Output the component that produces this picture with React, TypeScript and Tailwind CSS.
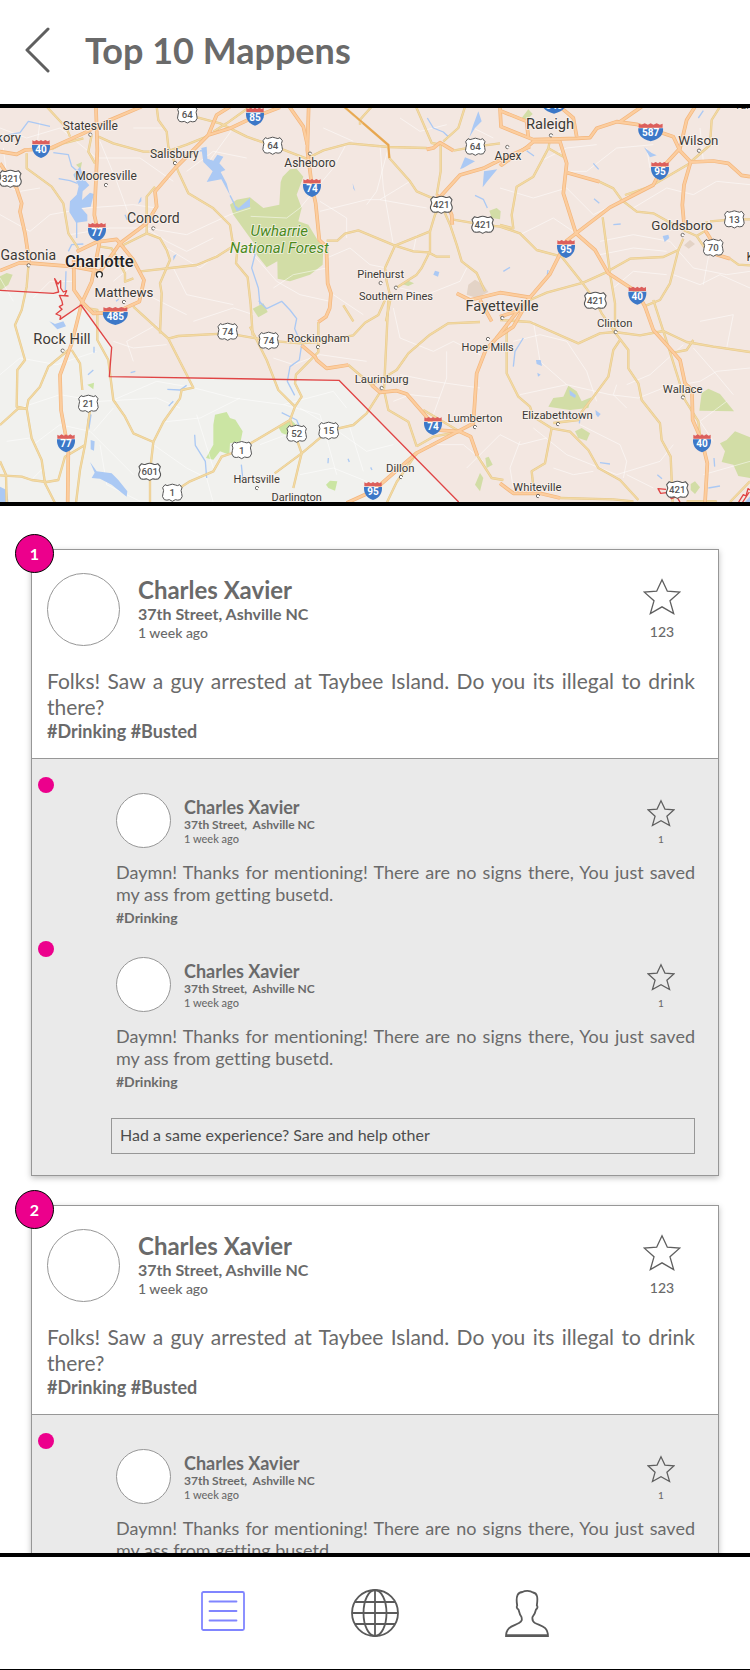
import React from "react";

const highways = [
  // I-77 and I-85
  "M288 0 L292 126 L283 321 L294 370 L298 406 L275 521 L245 586 L215 706 L180 801 L183 906 L205 1026 L203 1185",
  "M0 488 L60 464 L100 466 L220 476 L300 491 L360 406 L440 346 L470 296 L465 251 L525 181 L600 106 L625 81 L690 61 L765 26 L840 -2",
  "M625 81 L650 21 L690 -4",
  // I-40 west
  "M0 131 L50 139 L75 126 L150 121 L250 76 L330 36 L425 -4",
  "M0 166 L50 241 L65 286 L60 311 L75 376 L88 462",
  // Charlotte loop
  "M230 431 L290 402 L350 394 L400 456 L432 516 L418 581 L385 596 L346 614 L280 616 L250 586 L222 546 L221 456",
  // I-74
  "M926 -4 L922 126 L936 236 L947 286 L958 396 L979 416 L983 526 L993 556 L989 601 L978 626 L955 642",
  "M868 -4 L910 56 L922 110",
  "M905 712 L945 746 L950 756 L980 781 L1045 771",
  "M1115 831 L1140 853 L1190 848 L1220 858 L1275 921 L1310 966 L1380 971 L1412 986 L1432 1043",
  // I-95
  "M1040 1185 L1119 1149 L1250 1035 L1420 946 L1430 796 L1457 726 L1490 690 L1540 656 L1590 568 L1650 498 L1700 398 L1728 376 L1830 298 L1960 231 L1985 181 L2040 121 L2060 36 L2085 -4",
  // Raleigh
  "M1500 166 L1505 171 L1580 118 L1600 101 L1680 101 L1700 166 L1690 256 L1728 376 L1785 426 L1825 496 L1912 553 L1935 596 L1960 666 L2000 710 L2040 756 L2055 826 L2076 846 L2078 936 L2106 1000 L2122 1066 L2115 1185",
  "M1320 267 L1380 201 L1450 181 L1500 156 L1590 116",
  "M1500 0 L1503 56 L1600 95 L1732 91 L1770 89 L1790 61 L1850 41 L1910 49 L2020 86 L2040 128 L2072 162 L2140 159 L2185 166 L2225 202 L2250 206",
  "M1860 41 L1925 -4",
  "M1702 194 L1798 221",
  "M2072 162 L2052 231 L2047 291 L2052 346",
  "M1730 86 L1720 30 L1680 -4",
  "M1585 90 L1580 40 L1500 8",
  "M1310 262 L1335 276 L1355 320 L1357 350",
  "M1280 124 L1300 120 L1320 104 L1360 128",
  "M2115 366 L2130 390 L2150 440 L2190 452",
  // Fayetteville
  "M1370 556 L1410 576 L1500 554 L1590 568 L1560 600 L1490 690",
  "M1440 576 L1475 640 M1500 626 L1560 606",
  "M1500 1126 L1540 1156 L1620 1156 L1680 1170",
];

const roads = [
  "M80 136 L80 181 L155 236 L190 286 L205 376 L235 421",
  "M275 81 L265 131 L285 166",
  "M140 -4 L200 61 L210 86",
  "M295 86 L340 106 L430 131 L500 131",
  "M155 124 L190 106 L250 91",
  "M470 -4 L475 36 L500 71 L505 116 L535 191 L565 256 L640 301 L690 351 L697 396 L712 426 L708 466 L743 508 L752 590 L758 682",
  "M560 20 L660 46 L740 86 L818 113 L920 152 L970 127 L1048 106 L1165 117 L1280 120",
  "M440 376 L440 266 L465 236",
  "M370 411 L440 376 L480 391 L500 426 L510 456 L480 526 L485 556 L480 676",
  "M415 491 L590 471 L650 446 L697 416",
  "M300 416 L335 421 L375 496 L375 521 L400 511",
  "M85 476 L80 536 L65 606 L45 651 L75 756 L52 786 L50 896 L80 902",
  "M640 71 L680 46 L750 -4",
  "M500 131 L560 110 L620 86",
  "M1032 -4 L1165 111 L1168 150 L1230 220 L1250 250 L1320 280",
  "M1115 -4 L1080 35 L1080 50",
  "M1248 -4 L1295 105 L1322 110 L1322 190 L1310 262",
  "M1395 -4 L1375 60 L1330 100",
  "M980 398 L1012 398 L1035 377 L1075 367 L1185 413 L1290 370 L1290 430 L1265 480 L1250 500 L1188 540",
  "M1290 370 L1305 320 L1324 290 L1350 350 L1370 410 L1385 460 L1430 495 L1455 550",
  "M1360 335 L1448 350 L1500 356 L1560 376 L1610 426 L1685 446 L1748 526 L1786 578 L1805 616 L1844 672",
  "M1185 413 L1155 480 L1160 520 L1172 570 L1158 640",
  "M1185 413 L1240 430 L1285 433 L1310 446 L1350 446",
  "M0 1102 L65 1106 L95 1116 L140 1122 L175 1116 L195 1046 L255 1011 L270 906 L262 876",
  "M0 951 L55 901 L80 902 L95 991 L125 1056 L135 1126 L165 1185",
  "M80 902 L85 876 L120 836 L145 776 L205 726",
  "M0 1060 L18 1100 L20 1185",
  "M215 726 L240 766 L247 846",
  "M255 1011 L240 1086 L228 1185",
  "M270 602 L292 606 L292 696 L325 756 L340 876 L375 926 L400 976 L460 1002 L490 942 L540 871 L545 846 L580 839 L505 692 L400 596",
  "M505 692 L535 684 L683 676 L806 698 L900 706 L955 702 L1060 682 L1095 644 L1135 621 L1155 576",
  "M460 1002 L450 1091 L450 1185",
  "M1030 592 L1060 640",
  "M517 1154 L570 1120 L640 1090 L665 1046 L725 1026 L752 1006 L870 936 L885 896 L835 846 L800 756 L750 656",
  "M885 896 L905 866 L885 826 L888 800 L955 732 L955 642",
  "M824 1096 L905 1036 L986 968 L1060 951 L1100 916 L1140 853",
  "M870 936 L905 1036 L895 1076 L880 1140",
  "M1045 771 L1115 831 L1190 786 L1225 736 L1290 680 L1345 646 L1440 642",
  "M1165 576 L1152 846 L1165 906 L1225 941 L1250 1015",
  "M1250 1015 L1300 986 L1380 971 L1270 906",
  "M1432 1043 L1475 1110 L1510 1116",
  "M1250 1035 L1190 1122 L1160 1185",
  "M1500 636 L1590 642 L1735 706 L1800 676 L1844 672 L1920 682 L1990 669",
  "M1520 646 L1520 796 L1555 866 L1590 896 L1600 926 L1655 961 L1710 971 L1765 1026 L1795 1080 L1860 1116 L1915 1176",
  "M1655 961 L1635 1066 L1595 1090 L1600 1135",
  "M1860 696 L1840 726 L1825 806 L1770 880 L1745 912 L1735 936 L1660 945",
  "M1844 672 L1885 726 L1885 781 L1915 826 L1925 876 L1980 946 L1985 996 L2012 1046 L2018 1185",
  "M1960 576 L2000 700 L2055 876 L2095 940 L2100 980",
  "M1990 669 L2060 702 L2140 716 L2250 732",
  "M2020 734 L2060 726 L2080 696",
  "M1845 676 L1845 586 L1830 496 L1808 328",
  "M1830 486 L1890 452 L1990 447 L2035 426 L2050 392",
  "M2035 426 L2010 526 L1980 576 L1930 596",
  "M1590 576 L1640 554 L1750 524 L1825 490",
  "M1500 351 L1540 361 L1535 321 L1550 236 L1600 206 L1645 121 L1648 105",
  "M1645 121 L1690 146",
  "M1798 221 L1840 241 L1865 276 L1910 311 L1960 316 L2050 366 L2090 384 L2115 421 L2140 428",
  "M2130 340 L2203 334 L2250 334",
  "M2190 452 L2215 470 L2250 472",
  "M1875 261 L1950 236 L2070 166",
  "M2072 162 L2130 111 L2135 36 L2160 -4",
  "M2090 384 L2120 366 L2120 340",
  "M1680 1170 L1840 1174 L1900 1180",
  "M2190 1182 L2250 1120",
  "M2060 1180 L2150 1180",
  "M1360 128 L1426 116 L1500 106",
];

const lanes = [
  "M0 60 L80 90 L180 60 L290 150 L420 150 L520 220",
  "M0 320 L90 370 L150 320 L260 300 L400 290 L470 300",
  "M210 380 L330 360 L440 360 L560 380 L690 320 L752 300",
  "M300 100 L350 220 L390 330 L500 400 L560 430 L640 390",
  "M500 420 L600 480 L650 440 M520 480 L560 560 L700 590",
  "M0 230 L60 250 L120 240 M10 120 L20 200 M120 40 L110 120",
  "M560 190 L640 130 L740 150 M620 170 L700 60 M400 60 L490 60",
  "M752 325 L860 330 L900 300 L1000 180 L1040 106",
  "M960 310 L1100 275 L1140 275 L1230 220 M1140 110 L1150 240 L1180 410",
  "M1165 120 L1130 250 L1100 290 M1140 275 L1280 300",
  "M980 450 L1050 420 L1110 470 L1160 480 M1040 390 L1040 330 L960 280",
  "M820 540 L880 500 L980 480 M760 440 L830 520 L900 560 L990 580",
  "M1200 540 L1280 560 L1380 520 L1400 480 M1240 430 L1250 380",
  "M1200 30 L1260 70 L1340 50 M970 60 L1060 100 M1420 60 L1480 90",
  "M1500 240 L1600 270 L1700 240 L1780 320 L1860 280",
  "M1700 190 L1760 190 L1850 120 L1960 110 M1620 160 L1700 120 L1790 110",
  "M1560 380 L1660 330 L1728 376 L1800 440 L1900 420 L2000 430",
  "M1900 300 L2000 240 L2080 260 L2150 220 L2250 230",
  "M1800 400 L1900 380 L2010 400 L2080 480 L2180 500 L2250 490",
  "M2020 500 L2100 530 L2160 500 L2250 540 M2130 420 L2110 530",
  "M1840 540 L1900 490 L2000 500 M2100 60 L2110 160 M1940 120 L1950 180",
  "M1540 700 L1620 680 L1700 700 L1760 790 L1790 880 M1600 640 L1620 760 L1700 830",
  "M1560 860 L1700 830 L1830 860 L1915 870 L1990 840 L2100 820 L2150 790 L2250 780",
  "M1880 830 L1950 800 L2050 710 M1850 830 L1840 860 L1880 900",
  "M1600 960 L1700 1040 L1850 1100 L1980 1060 L2020 1010",
  "M1740 950 L1860 1010 L1880 1060 L1870 1110 M1960 1140 L1880 1100",
  "M1500 980 L1560 1010 L1640 990 M1560 1000 L1530 1080 L1540 1140",
  "M2080 720 L2150 800 L2200 860 M2140 1000 L2100 940 L2180 880",
  "M2180 720 L2200 620 L2100 640 M1660 1080 L1720 1100 L1780 1090",
  "M1180 600 L1200 690 L1300 730 L1360 700 L1440 740 M1200 800 L1300 820 L1440 840",
  "M1340 730 L1340 810 L1300 920 M1180 880 L1230 860 L1320 870",
  "M1000 560 L1090 620 M820 750 L880 770 L960 740 L1100 760",
  "M0 800 L60 750 L170 770 L290 730 M60 900 L180 860 L300 880 L470 870 L540 900",
  "M340 876 L470 820 L580 839 L700 870 L850 890 L1000 850 L1040 900",
  "M400 760 L380 700 L470 650 M340 700 L400 720 L500 710 M580 640 L700 600 L760 620",
  "M100 1010 L180 950 L270 970 L400 1100 M20 1000 L90 990 M280 970 L340 900",
  "M490 942 L600 930 L720 870 M590 920 L640 1080 M460 1010 L560 1080 L620 1110",
  "M850 890 L960 920 L1010 1100 M900 900 L1000 960 L1100 1030 L1180 1010",
  "M900 1100 L1000 1080 L1100 1120 M1050 960 L1090 1090 M780 1010 L860 980",
  "M620 1110 L640 1185 M300 1010 L320 1130 L420 1180 M90 1120 L130 1080",
  "M1280 1010 L1390 1010 L1450 1060 M1400 1080 L1500 980 M2110 1100 L2250 1060",
  "M100 570 L150 520 L220 520 M0 510 L40 580 M400 470 L340 520 M440 560 L560 620",
];

const forests = [
  "M848 206 L870 184 L890 182 L910 206 L890 260 L905 300 L895 340 L925 350 L955 400 L970 420 L968 470 L930 500 L870 520 L833 512 L832 460 L800 478 L770 440 L765 410 L700 320 L690 290 L710 275 L750 268 L790 300 L838 290 L842 222 Z",
  "M0 505 L20 495 L38 500 L25 530 L0 548 Z",
  "M228 170 L246 162 L242 184 Z",
  "M758 602 L790 586 L803 612 L775 628 Z",
  "M1205 528 L1225 518 L1242 526 L1225 534 Z",
  "M1468 308 L1490 300 L1502 310 L1500 334 L1475 330 Z",
  "M1565 30 L1585 4 L1598 18 L1580 35 Z",
  "M1645 896 L1660 870 L1690 866 L1705 833 L1730 850 L1745 880 L1774 868 L1765 900 L1710 906 Z",
  "M1725 970 L1745 960 L1770 976 L1760 998 L1735 990 Z",
  "M2098 908 L2105 855 L2125 842 L2160 858 L2202 910 Z",
  "M2160 1006 L2180 996 L2205 970 L2250 988 L2250 1110 L2215 1104 L2200 1070 L2165 1062 L2175 1030 Z",
  "M2072 1128 L2085 1120 L2100 1138 L2085 1158 L2072 1146 Z",
  "M1425 1130 L1440 1095 L1450 1110 L1440 1150 Z",
  "M1456 1050 L1466 1046 L1478 1070 L1460 1080 Z",
];

const greens = [
  "M645 920 L680 912 L690 930 L706 935 L728 970 L722 1000 L690 1006 L688 1040 L660 1030 L640 1055 L618 1050 L640 1010 L640 950 Z",
  "M835 958 L870 932 L888 950 L870 985 L845 975 Z",
  "M978 1130 L990 1118 L1012 1120 L1005 1148 L985 1140 Z",
  "M262 830 L282 824 L280 844 Z",
];

const lakes = [
  "M210 280 L230 260 L236 235 L220 200 L240 176 L254 215 L268 232 L248 250 L246 276 L270 254 L282 258 L272 296 L244 300 L262 320 L262 340 L228 344 L208 312 Z",
  "M604 120 L620 116 L622 152 L640 158 L652 140 L670 146 L658 166 L676 186 L662 192 L680 226 L690 262 L664 214 L620 222 L638 190 L610 162 Z",
  "M700 288 L716 300 L750 270 L750 296 L710 310 Z",
  "M0 1136 L20 1146 L26 1185 L0 1185 Z",
  "M148 640 L165 648 L190 640 L198 655 L172 664 Z",
  "M1435 10 L1445 40 L1425 60 L1408 88 L1420 50 Z",
  "M1395 148 L1425 160 L1390 180 L1380 184 Z",
  "M1452 190 L1492 184 L1462 220 L1448 238 Z",
  "M1932 118 L1955 135 L1970 142 L1950 148 Z",
  "M1988 384 L2005 380 L2008 390 L1994 402 Z",
  "M1708 846 L1728 862 L1725 870 L1710 862 Z",
  "M1786 906 L1802 918 L1794 928 L1788 920 Z",
  "M1608 756 L1622 756 L1626 774 L1610 768 Z M1612 794 L1622 800 L1614 806 Z",
  "M1305 488 L1318 492 L1314 506 L1300 500 Z",
  "M270 1062 L290 1090 L335 1096 L355 1116 L382 1150 L380 1166 L335 1130 L300 1112 L275 1110 L284 1094 Z",
  "M272 996 L284 1000 L282 1028 L272 1024 Z M266 916 L275 920 L268 966 L262 940 Z",
  "M420 272 L424 266 L424 280 L414 288 Z M520 444 L530 438 L520 458 Z",
  "M1058 226 L1066 250 L1060 242 Z",
  "M2250 1165 L2235 1182 L2250 1182 Z",
];

const rivers = [
  "M18 82 L60 74 L85 40 L150 55",
  "M160 134 L205 140 L215 175 L232 190",
  "M176 212 L210 218 L232 226 M205 430 L215 410 L250 408 M198 490 L196 546",
  "M230 340 L230 390 M375 320 L382 336",
  "M620 130 L600 128 L585 134 M690 262 L704 290",
  "M750 410 L765 440 L755 480 L775 540 L780 590",
  "M776 578 L800 602 L845 580 L870 606 L890 632 L884 662 L905 710 L898 756 L870 776 L862 820 L884 862",
  "M1282 30 L1300 60 L1330 72 L1345 86",
  "M1425 262 L1450 274 L1462 300",
  "M1580 128 L1602 144 M1780 166 L1796 184 M1782 272 L1798 286 M1840 350 L1862 348",
  "M1510 490 L1530 478 M1642 500 L1644 486 M2095 30 L2110 8",
  "M1540 776 L1545 730 L1570 690 M1740 930 L1738 946",
  "M1800 1064 L1830 1068 M1972 1100 L1986 1112 M2125 1140 L2160 1134 M2142 1050 L2144 1076",
  "M502 844 L540 846 L560 832 M520 880 L506 894 M584 980 L586 1012 L616 1060 L620 1110 M724 1070 L728 1110 L740 1120",
  "M845 914 L890 936 L900 960 M985 1050 L984 1066 M1044 1052 L1048 1062 M1112 1078 L1116 1086",
  "M282 716 L282 734 M264 800 L280 786 M392 794 L406 790 M348 580 L356 574",
];

const places: [string, number, number, number][] = [
  ["Statesville", 271, 66, 36],
  ["Hickory", -3, 102, 39],
  ["Salisbury", 523, 151, 36],
  ["Mooresville", 318, 217, 36],
  ["Concord", 460, 345, 42],
  ["Gastonia", 85, 455, 42],
  ["Matthews", 372, 567, 40],
  ["Asheboro", 930, 177, 36],
  ["Pinehurst", 1142, 509, 33],
  ["Southern Pines", 1188, 576, 33],
  ["Raleigh", 1650, 64, 44],
  ["Wilson", 2095, 111, 40],
  ["Apex", 1524, 157, 36],
  ["Goldsboro", 2046, 366, 40],
  ["Fayetteville", 1506, 609, 44],
  ["Kinston", 2300, 460, 36],
  ["Tarboro", 2260, 2, 33],
  ["Rock Hill", 186, 707, 44],
  ["Rockingham", 955, 702, 34],
  ["Hope Mills", 1463, 728, 33],
  ["Laurinburg", 1145, 825, 34],
  ["Lumberton", 1425, 942, 34],
  ["Dillon", 1201, 1091, 34],
  ["Darlington", 890, 1178, 33],
  ["Hartsville", 770, 1124, 33],
  ["Clinton", 1844, 656, 34],
  ["Wallace", 2048, 855, 34],
  ["Elizabethtown", 1672, 932, 34],
  ["Whiteville", 1612, 1149, 34],
];

const dots = [
  [271, 80], [525, 165], [318, 231], [460, 361], [86, 472], [372, 582], [930, 137],
  [1142, 525], [1188, 539], [1653, 82], [2097, 128], [1522, 117], [2048, 381], [1507, 630],
  [188, 728], [954, 717], [1464, 693], [1145, 840], [1425, 957], [1203, 1107], [771, 1140],
  [1847, 672], [2049, 868], [1674, 948], [1614, 1164],
];

const interstates: [string, number, number][] = [
  ["40", 123, 123], ["77", 291, 372], ["85", 765, 26], ["74", 936, 240], ["540", 1662, -10],
  ["587", 1952, 73], ["95", 1980, 189], ["95", 1698, 423], ["40", 1912, 563], ["485", 346, 624],
  ["77", 198, 1006], ["74", 1299, 954], ["95", 1119, 1149], ["40", 2106, 1006],
];

const usRoutes: [string, number, number][] = [
  ["64", 562, 19], ["321", 31, 212], ["64", 818, 113], ["64", 1426, 116], ["421", 1324, 290],
  ["421", 1448, 350], ["13", 2203, 334], ["70", 2140, 419], ["421", 1786, 578], ["74", 683, 671],
  ["21", 265, 887], ["601", 449, 1091], ["1", 517, 1154], ["1", 725, 1026], ["74", 806, 698],
  ["52", 890, 977], ["15", 986, 968], ["421", 2032, 1145],
];

const border =
  "M0 547 L160 556 L176 552 L172 536 L164 512 L174 528 L182 518 L182 540 L190 552 L200 548 L194 562 L204 564 L178 562 L186 580 L188 590 L178 596 L186 604 L168 618 L182 624 L180 634 L243 591 L335 718 L328 806 L1017 817 L1376 1182";

function Interstate({ label, x, y }: { label: string; x: number; y: number }) {
  const wide = label.length > 2;
  return (
    <g transform={`translate(${x} ${y})`}>
      <g transform={wide ? "scale(1.38 1)" : undefined}>
        <path d="M-27 -12 H27 C28 4 22 20 0 27 C-22 20 -28 4 -27 -12 Z" fill="#3c78c8" />
        <path d="M-26 -14 V-26 L-20 -23 L-13 -27 L-6 -23 L0 -27 L6 -23 L13 -27 L20 -23 L26 -26 V-14 Z" fill="#dc5f5c" />
      </g>
      <text y="12" textAnchor="middle" fontSize="30" fontWeight="700" fill="#fff">{label}</text>
    </g>
  );
}

function UsRoute({ label, x, y }: { label: string; x: number; y: number }) {
  const wide = label.length > 2;
  return (
    <g transform={`translate(${x} ${y})`}>
      <path
        transform={wide ? "scale(1.1 1)" : undefined}
        d="M-22 -24 Q-16 -19 -9 -23 Q0 -28 9 -23 Q16 -19 22 -24 L29 -15 Q24 -6 28 2 Q33 12 24 21 Q16 24 9 21 L0 26 L-9 21 Q-16 24 -24 21 Q-33 12 -28 2 Q-24 -6 -29 -15 Z"
        fill="#fff"
        stroke="#555"
        strokeWidth="3"
        strokeLinejoin="round"
      />
      <text y="11" textAnchor="middle" fontSize="29" fontWeight="500" fill="#555">{label}</text>
    </g>
  );
}

function RegionMap() {
  return (
    <svg
      viewBox="0 0 2250 1182"
      preserveAspectRatio="xMidYMid slice"
      className="block h-[394px] w-full font-['Roboto',sans-serif]"
      role="img"
      aria-label="Map of the Carolinas"
    >
      <rect width="2250" height="1182" fill="#f1f1ee" />
      <path d={`${border} H2250 V0 H0 Z`} fill="#f3e7e1" />
      {forests.map((d) => <path key={d} d={d} fill="#d2dda6" />)}
      {greens.map((d) => <path key={d} d={d} fill="#cbe5a3" />)}
      <path d="M1405 530 L1425 515 L1450 530 L1465 552 L1430 570 L1400 560 Z M2052 412 L2070 396 L2085 408 L2066 422 Z" fill="#e3d3c6" />
      <g fill="none" stroke="#fff" strokeOpacity="0.5" strokeWidth="3" strokeLinejoin="round">
        {lanes.map((d) => <path key={d} d={d} />)}
      </g>
      {lakes.map((d) => <path key={d} d={d} fill="#abc9f4" />)}
      <g fill="none" stroke="#abc9f4" strokeWidth="4" strokeLinejoin="round">
        {rivers.map((d) => <path key={d} d={d} />)}
      </g>
      <g fill="none" stroke="#e6c98d" strokeWidth="7" strokeLinejoin="round">
        {roads.map((d) => <path key={d} d={d} />)}
      </g>
      <g fill="none" stroke="#f3d9a2" strokeWidth="4" strokeLinejoin="round">
        {roads.map((d) => <path key={d} d={d} />)}
      </g>
      <g fill="none" stroke="#f3b67d" strokeWidth="11" strokeLinejoin="round">
        {highways.map((d) => <path key={d} d={d} />)}
      </g>
      <g fill="none" stroke="#fccd9e" strokeWidth="7" strokeLinejoin="round">
        {highways.map((d) => <path key={d} d={d} />)}
      </g>
      <path d="M1088 44 L1165 111 L1168 150" fill="none" stroke="#e9a650" strokeWidth="6" />
      <path d="M1032 -4 L1088 44" fill="none" stroke="#e9a650" strokeWidth="5" />
      <g fill="none" stroke="#e04444" strokeWidth="4" strokeLinejoin="round">
        <path d={border} />
        <path d="M1998 1144 L1974 1142 L1982 1156 L2000 1154 L2014 1172 L2030 1166 L2040 1182 M2216 1182 L2230 1160 L2238 1164 L2244 1142 L2250 1146 M2228 1182 L2248 1152" />
      </g>
      {dots.map(([x, y]) => (
        <circle key={`${x}-${y}`} cx={x} cy={y} r="5" fill="#fff" stroke="#5a5550" strokeWidth="2.5" strokeDasharray="24 8" strokeDashoffset="-4" />
      ))}
      <circle cx="298" cy="500" r="9" fill="#fff" stroke="#222" strokeWidth="4" strokeDasharray="48 9" strokeDashoffset="-18" />
      {interstates.map(([l, x, y]) => <Interstate key={`${l}-${x}`} label={l} x={x} y={y} />)}
      {usRoutes.map(([l, x, y]) => <UsRoute key={`${l}-${x}`} label={l} x={x} y={y} />)}
      <g fill="#3c3a36" stroke="#fbf5f1" strokeWidth="5" strokeOpacity="0.8" paintOrder="stroke" textAnchor="middle">
        {places.map(([name, x, y, size]) => (
          <text key={name} x={x} y={y} fontSize={size}>{name}</text>
        ))}
        <text x="298" y="477" fontSize="50" fontWeight="500" fill="#222">Charlotte</text>
        <g fill="#4a8a1c" fontStyle="italic" fontSize="45">
          <text x="838" y="385">Uwharrie</text>
          <text x="838" y="435">National Forest</text>
        </g>
      </g>
    </svg>
  );
}

function Star({ small = false }: { small?: boolean }) {
  return (
    <svg
      viewBox="0 0 114 110"
      className={small ? "h-7 w-7" : "h-[37px] w-[38px]"}
      fill="none"
      stroke="#5f5f5f"
      strokeWidth={small ? 5 : 4}
      aria-hidden="true"
    >
      <path d="M57 5 L73 39 L110 42 L81 68 L92 106 L57 86 L22 106 L33 68 L4 42 L41 39 Z" />
    </svg>
  );
}

function Comment() {
  return (
    <li className="flex h-41 items-start gap-[62px]">
      <span className="size-4 shrink-0 rounded-full bg-[#ec008c]" />
      <div className="min-w-0 flex-1 pt-4">
        <div className="flex items-start">
          <span className="size-[55px] shrink-0 rounded-full border border-[#979797] bg-white" />
          <div className="ml-[13px] flex-1 pt-1">
            <h3 className="text-[18px] leading-5 font-bold">Charles Xavier</h3>
            <p className="text-[12px] leading-4 font-bold whitespace-pre">37th Street,  Ashville NC</p>
            <p className="text-[11px] leading-3 font-medium">1 week ago</p>
          </div>
          <button type="button" aria-label="Star comment" className="mr-5 flex w-7 flex-col items-center gap-1.5 pt-1.5">
            <Star small />
            <span className="text-[10px] leading-3 font-medium">1</span>
          </button>
        </div>
        <p className="mt-[13px] text-justify text-[18px] leading-[22px]">
          Daymn! Thanks for mentioning! There are no signs there, You just saved my ass from getting busetd.
        </p>
        <p className="mt-0.5 text-[14px] leading-[22px] font-bold">#Drinking</p>
      </div>
    </li>
  );
}

function Post({ rank }: { rank: number }) {
  return (
    <article className="relative border border-[#979797] bg-white shadow-[0_2px_6px_rgba(0,0,0,0.25)]">
      <span className="absolute -top-4 -left-[17px] flex size-[39px] items-center justify-center rounded-full border border-black bg-[#ec008c] text-[16px] font-bold text-white">
        {rank}
      </span>
      <div className="border-b border-[#979797] pt-[23px] pr-[23px] pb-4 pl-[15px]">
        <div className="flex items-start">
          <span className="size-[73px] shrink-0 rounded-full border border-[#979797] bg-white" />
          <div className="ml-[18px] flex-1 pt-[3px]">
            <h2 className="text-[24px] leading-7 font-bold">Charles Xavier</h2>
            <p className="text-[16px] leading-5 font-bold">37th Street, Ashville NC</p>
            <p className="text-[14px] leading-[18px] font-medium">1 week ago</p>
          </div>
          <button type="button" aria-label="Star post" className="mr-3.5 flex w-[38px] flex-col items-center gap-2 pt-[5px]">
            <Star />
            <span className="text-[14px] leading-[18px] font-medium">123</span>
          </button>
        </div>
        <p className="mt-[22px] text-justify text-[21px] leading-[26px]">
          Folks! Saw a guy arrested at Taybee Island. Do you its illegal to drink there?
        </p>
        <p className="text-[18px] leading-[22px] font-bold">#Drinking #Busted</p>
      </div>
      <div className="bg-[#eaeaea] pt-[18px] pr-[23px] pb-[21px] pl-1.5">
        <ul>
          <Comment />
          <Comment />
        </ul>
        <div className="mt-[13px] ml-[73px]">
          <input
            type="text"
            aria-label="Share your experience"
            placeholder="Had a same experience? Sare and help other"
            className="block h-9 w-full border border-[#979797] bg-transparent px-2 pb-1 text-[16px] text-[#4d4d4d] outline-none placeholder:text-[#4d4d4d]"
          />
        </div>
      </div>
    </article>
  );
}

export default function App() {
  return (
    <div className="flex h-screen flex-col overflow-hidden bg-white font-['Lato','Open_Sans',sans-serif] text-[#6a6a6a] [font-variant-ligatures:none]">
      <header className="flex h-26 shrink-0 items-center gap-[35px] pl-6">
        <button type="button" aria-label="Back" className="-mt-1 shrink-0">
          <svg viewBox="0 0 26 46" className="h-[46px] w-[26px]" fill="none" stroke="#5f5f5f" strokeWidth="3" strokeLinecap="round" strokeLinejoin="round">
            <path d="M24 2 L3 23 L24 44" />
          </svg>
        </button>
        <h1 className="pb-1 text-[36px] leading-10 font-bold">Top 10 Mappens</h1>
      </header>
      <div className="shrink-0 border-y-4 border-black">
        <RegionMap />
      </div>
      <main className="flex min-h-0 flex-1 flex-col gap-[29px] overflow-y-auto px-[31px] pt-[43px] [scrollbar-width:none]">
        <Post rank={1} />
        <Post rank={2} />
      </main>
      <nav className="flex h-[117px] shrink-0 items-center justify-center gap-[106px] border-t-4 border-b border-black">
        <a href="#list" aria-label="List">
          <svg viewBox="0 0 44 48" className="h-12 w-11" fill="none" stroke="#8085ff" strokeWidth="1.8" strokeLinecap="round">
            <rect x="1" y="3" width="42" height="38" rx="1.5" />
            <path d="M8.500 12.500 H35.500 M8.500 22 H35.500 M8.500 31.500 H35.500" />
          </svg>
        </a>
        <a href="#world" aria-label="World">
          <svg viewBox="0 0 48 48" className="size-12" fill="none" stroke="#5a5a5a" strokeWidth="1.8">
            <circle cx="24" cy="24" r="23" />
            <ellipse cx="24" cy="24" rx="11.5" ry="23" />
            <path d="M24 1 V47 M1 24 H47 M4 13 H44 M4 35 H44" />
          </svg>
        </a>
        <a href="#profile" aria-label="Profile">
          <svg viewBox="0 0 44 48" className="h-12 w-11" fill="none" stroke="#5a5a5a" strokeWidth="1.8" strokeLinejoin="round">
            <path d="M1 47.5 C1 37 9 37 14 34 C17.500 32 17 30.500 16.500 28 C14.500 25.500 14 22.500 13.500 20.500 C11.500 19.500 11.500 17.500 12.200 16.500 C10.500 7 13 3 17.500 3 C20 1.500 25 1.500 28 3.500 C32.500 4 33 9 31.800 16.500 C33 17.500 32.500 19.500 31 20.500 C30.500 23 29.500 25.500 27.500 28 C27 31 27.500 32.500 30 34 C36 37 43 37 43 47.500 Z" />
            <path d="M1 46.500 H43" strokeWidth="2.400" />
          </svg>
        </a>
      </nav>
    </div>
  );
}
